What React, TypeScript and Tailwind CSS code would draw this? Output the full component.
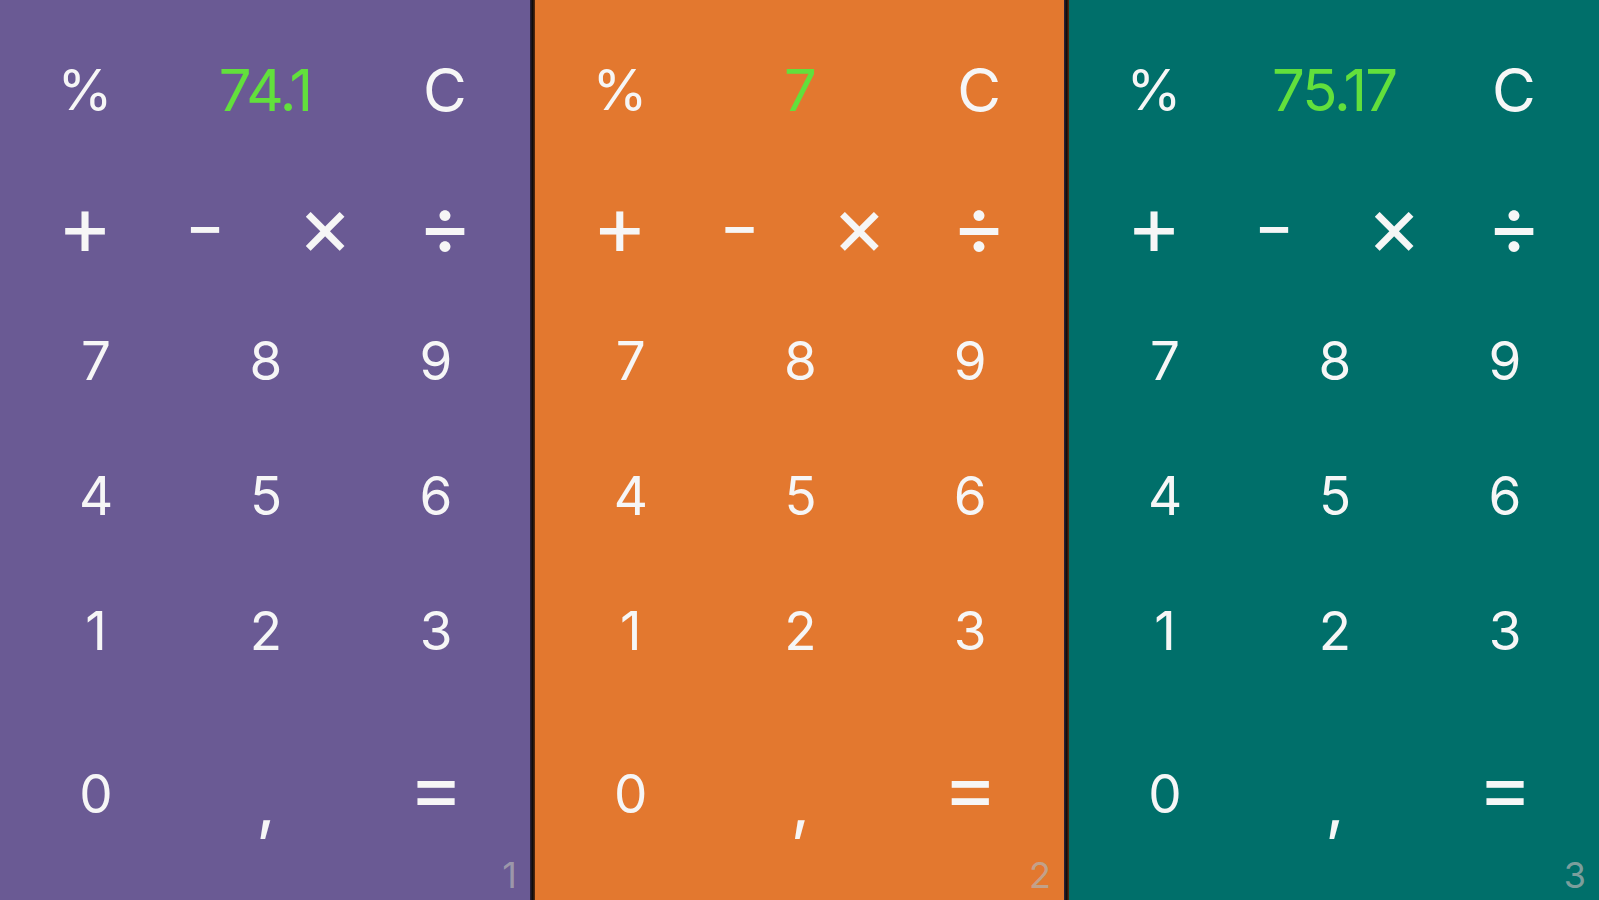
import React from "react";

type Panel = {
  id: number;
  value: string;
  bg: string;
  width: string;
};

const panels: Panel[] = [
  { id: 1, value: "74.1", bg: "bg-[#6a5a94]", width: "w-[530px]" },
  { id: 2, value: "7", bg: "bg-[#e3782f]", width: "w-[529px]" },
  { id: 3, value: "75.17", bg: "bg-[#006f6a]", width: "w-[530px]" },
];

const digitRows = [
  ["7", "8", "9"],
  ["4", "5", "6"],
  ["1", "2", "3"],
];

function Key({ children, className = "" }: { children: React.ReactNode; className?: string }) {
  return (
    <button className={"flex items-center justify-center leading-none text-[#f6f6f6] " + className}>
      {children}
    </button>
  );
}

function Divider() {
  return <div className="w-[5px] h-full bg-linear-to-r from-[#2a2340] via-[#110c09] to-[#5a2c0e]" />;
}

function CalcPanel({ panel }: { panel: Panel }) {
  return (
    <div className={`relative flex flex-col h-full shrink-0 pt-[14px] ${panel.bg} ${panel.width}`}>
      {/* display row */}
      <div className="grid grid-cols-4 h-[152px] px-[25px]">
        <Key className="text-[56px]">%</Key>
        <div className="col-span-2 flex items-center justify-center leading-none text-[58px] tracking-[-2px] text-[#62e03c]">
          {panel.value}
        </div>
        <Key className="text-[60px]">C</Key>
      </div>

      {/* operators */}
      <div className="grid grid-cols-4 h-[128px] px-[25px] pb-[10px]">
        <Key className="text-[84px]">+</Key>
        <Key className="text-[60px] font-medium">−</Key>
        <Key className="text-[84px]">×</Key>
        <Key className="text-[84px]">÷</Key>
      </div>

      {digitRows.map((row) => (
        <div key={row.join("")} className="grid grid-cols-3 h-[135px] pl-[11px] pr-[9px]">
          {row.map((d) => (
            <Key key={d} className="text-[53px]">{d}</Key>
          ))}
        </div>
      ))}

      <div className="grid grid-cols-3 h-[190px] pl-[11px] pr-[9px]">
        <Key className="text-[53px]">0</Key>
        <Key className="text-[68px] pt-[16px]">,</Key>
        <Key className="text-[84px] pb-[14px]">=</Key>
      </div>

      <span className="absolute right-[13px] bottom-[7px] text-[36px] leading-none text-[#b4b4b4]/70">
        {panel.id}
      </span>
    </div>
  );
}

export default function App() {
  return (
    <div className="flex h-[900px] w-[1599px] overflow-hidden font-['Inter',sans-serif]">
      <CalcPanel panel={panels[0]} />
      <Divider />
      <CalcPanel panel={panels[1]} />
      <Divider />
      <CalcPanel panel={panels[2]} />
    </div>
  );
}
